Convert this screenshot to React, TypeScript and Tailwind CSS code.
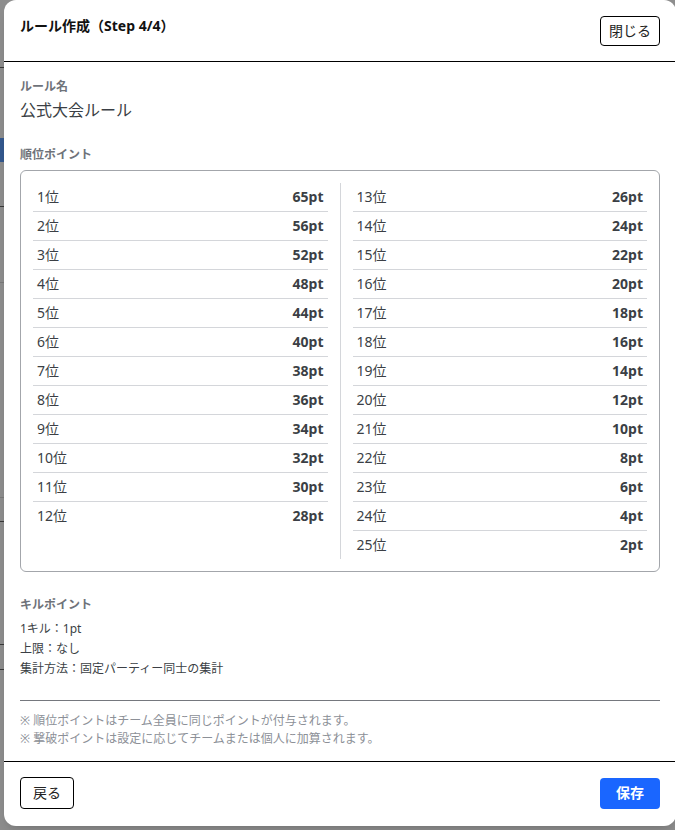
import React from "react";

const RANK_POINTS = [65, 56, 52, 48, 44, 40, 38, 36, 34, 32, 30, 28, 26, 24, 22, 20, 18, 16, 14, 12, 10, 8, 6, 4, 2];

const KILL_RULES = ["1キル：1pt", "上限：なし", "集計方法：固定パーティー同士の集計"];

const NOTES = [
  "※ 順位ポイントはチーム全員に同じポイントが付与されます。",
  "※ 撃破ポイントは設定に応じてチームまたは個人に加算されます。",
];

function RankColumn({ start, points }: { start: number; points: number[] }) {
  return (
    <div className="flex flex-col">
      {points.map((pt, i) => (
        <div
          key={i}
          className={`flex items-center justify-between px-1 py-1 text-sm leading-5 text-[#3b3f45] ${
            i < points.length - 1 ? "border-b border-[#d4d6da]" : ""
          }`}
        >
          <span>{start + i}位</span>
          <span className="font-bold">{pt}pt</span>
        </div>
      ))}
    </div>
  );
}

// faint page behind the backdrop, only a sliver of it shows on the left
function BackdropStrip() {
  return (
    <div className="flex w-[4px] shrink-0 flex-col">
      <div className="h-[68px] border-b border-[#3a3a3a]" />
      <div className="h-[70px]" />
      <div className="h-[24px] bg-[#34598f]" />
      <div className="h-[45px] border-b border-[#3a3a3a]" />
      <div className="h-[76px] border-b border-[#7a7a7a]" />
      <div className="h-[215px] border-b border-[#7a7a7a]" />
      <div className="h-[24px] border-b border-[#3a3a3a]" />
      <div className="h-[123px] border-b border-[#3a3a3a]" />
      <div className="h-[25px] border-b border-[#3a3a3a]" />
    </div>
  );
}

export default function App() {
  return (
    <div
      className="flex h-[830px] w-[675px] overflow-hidden bg-[#8e8e8e]"
      style={{ fontFamily: '"Noto Sans", "Noto Sans CJK JP", sans-serif' }}
    >
      <BackdropStrip />
      <div className="flex h-[826px] w-[672px] shrink-0 flex-col rounded-xl bg-white shadow-lg">
        {/* header */}
        <div className="flex items-start justify-between border-b border-black px-4 pt-4 pb-[15px]">
          <h2 className="text-sm leading-5 font-bold text-[#111]">ルール作成（Step 4/4）</h2>
          <button className="rounded-[4px] border border-black bg-white px-2 py-1 text-sm leading-5 text-[#222]">
            閉じる
          </button>
        </div>

        {/* body */}
        <div className="flex flex-1 flex-col px-4 pt-[17px] pb-[13px]">
          <div className="text-xs leading-4 font-bold text-[#6f737a]">ルール名</div>
          <div className="mt-[3px] text-base leading-6 text-[#3b3f45]">公式大会ルール</div>

          <div className="mt-[25px] text-xs leading-4 font-bold text-[#6f737a]">順位ポイント</div>
          <div className="mt-[7px] rounded-md border border-[#a3a6ab] p-3">
            <div className="grid grid-cols-[1fr_1px_1fr] gap-3">
              <div>
                <RankColumn start={1} points={RANK_POINTS.slice(0, 12)} />
              </div>
              <div className="bg-[#d4d6da]" />
              <div>
                <RankColumn start={13} points={RANK_POINTS.slice(12)} />
              </div>
            </div>
          </div>

          <div className="mt-[25px] text-xs leading-4 font-bold text-[#6f737a]">キルポイント</div>
          <div className="mt-[6px] flex flex-col">
            {KILL_RULES.map((line) => (
              <div key={line} className="text-xs leading-5 text-[#3b3f45]">
                {line}
              </div>
            ))}
          </div>

          <div className="mt-[21px] h-px bg-[#75787e]" />

          <div className="mt-[11px] flex flex-col">
            {NOTES.map((note) => (
              <div key={note} className="text-xs leading-[18px] text-[#8c9097]">
                {note}
              </div>
            ))}
          </div>
        </div>

        {/* footer */}
        <div className="flex items-center justify-between border-t border-black px-4 pt-[15px] pb-[18px]">
          <button className="rounded-[4px] border border-black bg-white px-3 py-[5px] text-sm leading-5 text-[#222]">
            戻る
          </button>
          <button className="rounded-[4px] bg-[#1a66ff] px-4 py-[5.5px] text-sm leading-5 font-semibold text-white">
            保存
          </button>
        </div>
      </div>
    </div>
  );
}
